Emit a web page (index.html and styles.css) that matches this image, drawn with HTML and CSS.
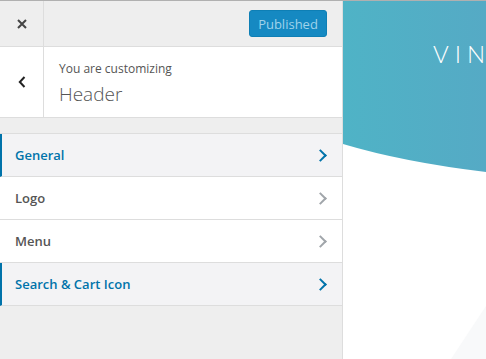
FILE: index.html
```html
<!DOCTYPE html>
<html lang="en">
<head>
    <meta charset="UTF-8">
    <title>Customizer - Header</title>
    <link rel="stylesheet" href="styles.css">
</head>
<body>
    <div class="app">
        <div class="sidebar">
            <div class="topbar">
                <button class="close-btn" aria-label="Close">
                    <svg width="10" height="10" viewBox="0 0 10 10"><path d="M1 1 L9 9 M9 1 L1 9" stroke="#444" stroke-width="2" fill="none"/></svg>
                </button>
                <button class="publish-btn">Published</button>
            </div>

            <div class="info">
                <button class="back-btn" aria-label="Back">
                    <svg width="8" height="12" viewBox="0 0 8 12"><path d="M6.5 1 L1.8 6 L6.5 11" stroke="#222" stroke-width="2" fill="none"/></svg>
                </button>
                <div class="info-text">
                    <span class="info-label">You are customizing</span>
                    <span class="info-title">Header</span>
                </div>
            </div>

            <ul class="sections">
                <li class="section active">General <span class="chev"></span></li>
                <li class="section">Logo <span class="chev"></span></li>
                <li class="section">Menu <span class="chev"></span></li>
                <li class="section active">Search &amp; Cart Icon <span class="chev"></span></li>
            </ul>
        </div>

        <div class="preview">
            <svg class="hero" width="143" height="358" viewBox="0 0 143 358">
                <defs>
                    <linearGradient id="teal" x1="0" y1="0" x2="1" y2="0">
                        <stop offset="0" stop-color="#4fb3c6"/>
                        <stop offset="1" stop-color="#55aac5"/>
                    </linearGradient>
                </defs>
                <path d="M0 0 H143 V171 Q60 161 0 143 Z" fill="url(#teal)"/>
                <path d="M143 305 L143 358 L108 358 Z" fill="#f8f9fa"/>
            </svg>
            <div class="brand">VI<span class="last">N</span></div>
        </div>
    </div>
</body>
</html>
```

FILE: styles.css
```css
body {
    margin: 0;
    border-top: 1px solid #b0b0b0;
    font-family: "Open Sans", "Noto Sans", sans-serif;
    background: #fff;
    overflow: hidden;
}
.app {
    display: flex;
    height: 358px;
}
.sidebar {
    width: 342px;
    flex-shrink: 0;
    background: #eee;
    border-right: 1px solid #ddd;
}
button {
    font-family: inherit;
    border: 0;
    background: none;
    padding: 0;
    cursor: pointer;
}
/* top bar */
.topbar {
    display: flex;
    align-items: center;
    height: 45px;
    border-bottom: 1px solid #ddd;
}
.close-btn {
    width: 44px;
    height: 45px;
    border-right: 1px solid #ddd;
    display: flex;
    align-items: center;
    justify-content: center;
}
.publish-btn {
    margin-left: auto;
    margin-right: 15px;
    width: 78px;
    height: 27px;
    border-radius: 3px;
    background: #1589c2;
    border: 1px solid #0e7fb5;
    color: #9fd3ea;
    font-size: 13px;
}
/* customizing info */
.info {
    display: flex;
    height: 70px;
    background: #fff;
    border-bottom: 1px solid #ddd;
}
.back-btn {
    width: 44px;
    border-right: 1px solid #ddd;
    display: flex;
    align-items: center;
    justify-content: center;
}
.info-text {
    display: flex;
    flex-direction: column;
    padding: 13px 0 0 15px;
    color: #555;
}
.info-label {
    font-size: 12px;
    line-height: 18px;
}
.info-title {
    font-size: 19px;
    font-weight: 300;
    line-height: 32px;
}
/* sections */
.sections {
    list-style: none;
    margin: 15px 0 0;
    padding: 0;
    border-top: 1px solid #ddd;
}
.section {
    display: flex;
    align-items: center;
    height: 42px;
    padding: 0 17px 0 15px;
    background: #fff;
    border-bottom: 1px solid #ddd;
    color: #555;
    font-size: 13px;
    font-weight: 600;
}
.section.active {
    background: #f3f3f5;
    color: #0073aa;
    border-left: 2px solid #0073aa;
    padding-left: 13px;
}
.chev {
    margin-left: auto;
    width: 7px;
    height: 7px;
    border-top: 2px solid #a0a5aa;
    border-right: 2px solid #a0a5aa;
    transform: rotate(45deg);
}
.section.active .chev {
    border-color: #0073aa;
}
/* preview */
.preview {
    position: relative;
    flex: 1;
    overflow: hidden;
    background: #fff;
}
.hero {
    display: block;
}
.brand {
    position: absolute;
    top: 38px;
    left: 90px;
    color: #fff;
    font-family: "Lato", sans-serif;
    font-weight: 300;
    font-size: 24px;
    letter-spacing: 6px;
    white-space: nowrap;
}
.brand .last {
    letter-spacing: 0;
}
```
